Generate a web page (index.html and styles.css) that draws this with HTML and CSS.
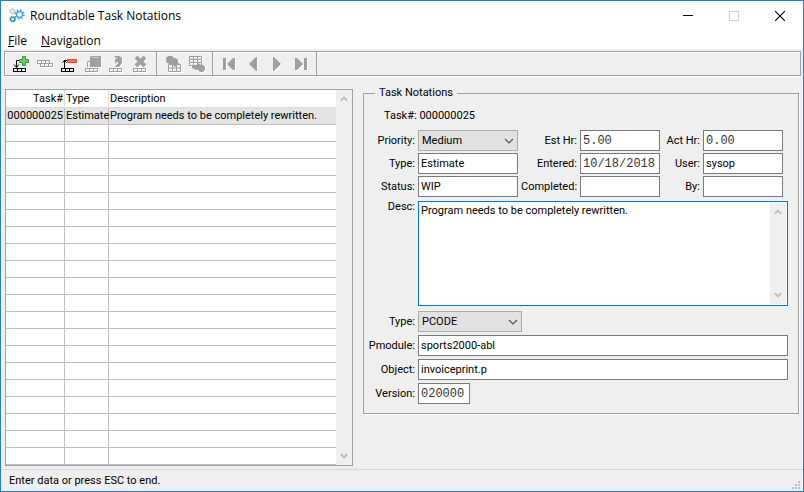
FILE: index.html
```html
<!DOCTYPE html>
<html lang="en">
<head>
<meta charset="utf-8">
<title>Roundtable Task Notations</title>
<link rel="stylesheet" href="styles.css">
<script src="rows.js" defer></script>
</head>
<body>
<svg class="defs" aria-hidden="true">
  <symbol id="strip" viewBox="0 0 13 4"><path d="M0 0h13v4H0zM1 1v2h3V1zM5 1v2h3V1zM9 1v2h3V1z" fill="currentColor" fill-rule="evenodd"/></symbol>
  <symbol id="up" viewBox="0 0 8 6"><path d="M.8 4.8 4 1.6l3.2 3.2" fill="none" stroke="#bfbfbf" stroke-width="2"/></symbol>
  <symbol id="down" viewBox="0 0 8 6"><path d="M.8 1.2 4 4.4l3.2-3.2" fill="none" stroke="#bfbfbf" stroke-width="2"/></symbol>
  <symbol id="chevron" viewBox="0 0 10 6"><path d="m1 1 4 4 4-4" fill="none" stroke="#555" stroke-width="1.2"/></symbol>
</svg>
<div class="window">
  <header class="titlebar">
    <svg width="16" height="16" viewBox="0 0 16 16" fill="none">
      <circle cx="10.500" cy="6.500" r="3" stroke="#35a7dc" stroke-width="1.300"/>
      <circle cx="10.500" cy="6.500" r="4.300" stroke="#35a7dc" stroke-width="1.800" stroke-dasharray="1.500 1.880"/>
      <circle cx="3.500" cy="3.300" r="1.800" stroke="#a9b4ba"/>
      <circle cx="3.500" cy="3.300" r="2.700" stroke="#a9b4ba" stroke-dasharray="1 1.120"/>
      <circle cx="3.700" cy="11.200" r="2" stroke="#337fae" stroke-width="1.200"/>
      <circle cx="3.700" cy="11.200" r="3" stroke="#337fae" stroke-dasharray="1.200 1.150"/>
    </svg>
    <h1>Roundtable Task Notations</h1>
    <div class="controls">
      <button aria-label="Minimize"><svg width="10" height="10"><path d="M0 4.500h10" stroke="#000"/></svg></button>
      <button aria-label="Maximize" disabled><svg width="10" height="10"><path d="M.5.5h9v9h-9z" fill="none" stroke="#ccc"/></svg></button>
      <button aria-label="Close"><svg width="10" height="10"><path d="m0 0 10 10M10 0 0 10" stroke="#000" stroke-width="1.100"/></svg></button>
    </div>
  </header>
  <nav class="menu"><a href="#file"><u>F</u>ile</a><a href="#navigation"><u>N</u>avigation</a></nav>

  <div class="toolbar" role="toolbar" aria-label="Task notation tools">
    <div class="group">
      <button class="on" aria-label="Add"><svg width="16" height="16"><use href="#strip" y="12" width="13" height="4"/><path d="M3.500 11V4.500H7M1 8.500l2.500 3L6 8.500" fill="none" stroke="currentColor"/><path d="M9.500.5h3v3h3v3h-3v3h-3v-3h-3v-3h3z" fill="#6dcc62" stroke="#2f9c3a"/></svg></button>
      <button aria-label="Rows"><svg width="16" height="16"><use href="#strip" y="4" width="13" height="4"/><use href="#strip" x="3" y="7" width="13" height="4"/></svg></button>
      <button class="on" aria-label="Delete"><svg width="16" height="16"><use href="#strip" y="12" width="13" height="4"/><path d="M3.500 12V4.500H7M1.500 6.500l2-2 2 2" fill="none" stroke="currentColor"/><path d="M6.500 3.500h9v3h-9z" fill="#ff704f" stroke="#e2472d"/></svg></button>
      <button aria-label="Save" disabled><svg width="16" height="16"><use href="#strip" y="12" width="13" height="4"/><path d="M2.500 11V5.500H5" fill="none" stroke="currentColor"/><path d="M5 1l1-1h10v11H5z" fill="currentColor"/><path d="M7 1.500h7" stroke="#efefef" opacity=".6"/></svg></button>
      <button aria-label="Undo" disabled><svg width="16" height="16"><use href="#strip" y="12" width="13" height="4"/><path d="M5 0h5l3 2v5l-3 4H6l3-4V6H8L6 8V3h2z" fill="currentColor"/></svg></button>
      <button aria-label="Cancel" disabled><svg width="16" height="16"><use href="#strip" y="12" width="13" height="4"/><path d="m3 1 9 9M12 1 3 10" stroke="currentColor" stroke-width="4"/></svg></button>
    </div>
    <div class="group">
      <button aria-label="Copy to table" disabled><svg width="16" height="16"><path d="M3 0h4l2 2h2l2 2v3l2 1-4 3-4-3H4L1 6V2z" fill="currentColor"/><path d="M3.500 8.500h12v7h-12zM3 12h12M7.500 8v8M11.500 8v8" fill="#efefef" stroke="currentColor"/><path d="M6 7h8l-4 4z" fill="currentColor"/></svg></button>
      <button aria-label="Copy from table" disabled><svg width="16" height="16"><path d="M.5.5h12v9H.5zM0 3.500h12M0 6.500h12M4.500 0v10M8.500 0v10" fill="none" stroke="currentColor"/><path d="M3 9h5V6l4 3h2l2 2v3l-2 2h-3l-2-2H7l-4-2z" fill="currentColor"/></svg></button>
    </div>
    <div class="group">
      <button aria-label="First" disabled><svg width="16" height="16"><path d="M2 2h3v12H2zM14 2v12H12L6 8l6-6z" fill="currentColor"/></svg></button>
      <button aria-label="Previous" disabled><svg width="16" height="16"><path d="M12 1v14h-1L4 8l7-7z" fill="currentColor"/></svg></button>
      <button aria-label="Next" disabled><svg width="16" height="16"><path d="M4 1v14h1l7-7-7-7z" fill="currentColor"/></svg></button>
      <button aria-label="Last" disabled><svg width="16" height="16"><path d="M11 2h3v12h-3zM2 2v12h2l6-6-6-6z" fill="currentColor"/></svg></button>
    </div>
  </div>

  <main>
    <div class="browse">
      <table>
        <colgroup><col class="c-task"><col class="c-type"><col></colgroup>
        <thead><tr><th class="num">Task#</th><th>Type</th><th>Description</th></tr></thead>
        <tbody id="rows"><tr class="selected"><td class="num">000000025</td><td>Estimate</td><td>Program needs to be completely rewritten.</td></tr></tbody>
      </table>
      <div class="scroll"><svg width="8" height="6"><use href="#up"/></svg><svg width="8" height="6"><use href="#down"/></svg></div>
    </div>

    <fieldset>
      <legend>Task Notations</legend>
      <form>
        <p class="task"><span>Task#:</span> <output>000000025</output></p>
        <label for="priority">Priority:</label>
        <div class="select"><select id="priority"><option>Medium</option></select><svg width="10" height="6"><use href="#chevron"/></svg></div>
        <label for="est">Est Hr:</label><input id="est" class="mono" value="5.00">
        <label for="act">Act Hr:</label><input id="act" class="mono short" value="0.00">

        <label for="type">Type:</label><input id="type" value="Estimate">
        <label for="entered">Entered:</label><input id="entered" class="mono" value="10/18/2018">
        <label for="user">User:</label><input id="user" class="short" value="sysop">

        <label for="status">Status:</label><input id="status" value="WIP">
        <label for="completed">Completed:</label><input id="completed">
        <label for="by">By:</label><input id="by" class="short">

        <label for="desc" class="top">Desc:</label>
        <div class="memo wide"><textarea id="desc" autofocus>Program needs to be completely rewritten.</textarea>
          <div class="scroll"><svg width="8" height="6"><use href="#up"/></svg><svg width="8" height="6"><use href="#down"/></svg></div></div>

        <label for="otype">Type:</label>
        <div class="select wide otype"><select id="otype"><option>PCODE</option></select><svg width="10" height="6"><use href="#chevron"/></svg></div>
        <label for="pmodule">Pmodule:</label><input id="pmodule" class="wide" value="sports2000-abl">
        <label for="object">Object:</label><input id="object" class="wide" value="invoiceprint.p">
        <label for="version">Version:</label><input id="version" class="wide mono version" value="020000">
      </form>
    </fieldset>
  </main>

  <footer><span>Enter data or press ESC to end.</span>
    <svg width="8" height="8"><path d="M6 0h2v2H6zM3 3h2v2H3zM6 3h2v2H6zM0 6h2v2H0zM3 6h2v2H3zM6 6h2v2H6z" fill="#bfbfbf"/></svg>
  </footer>
</div>
</body>
</html>
```
FILE: rows.js
```js
// Fill the browse with the empty rows that follow the data.
const EMPTY_ROWS = 20;
const body = document.getElementById("rows");
for (let i = 0; i < EMPTY_ROWS; i++) {
  const row = body.insertRow();
  for (let c = 0; c < 3; c++) row.insertCell();
}
document.getElementById("desc").setSelectionRange(0, 0);
```
FILE: styles.css
```css
* { box-sizing: border-box; }
body { margin: 0; font: 11px/14px Roboto, "Liberation Sans", sans-serif; color: #000; }
button, input, select, textarea { font: inherit; color: inherit; border-radius: 0; margin: 0; }
button { border: 0; padding: 0; background: none; display: grid; place-items: center; }
svg { display: block; flex: none; }
.defs { position: absolute; width: 0; height: 0; }

.window { min-height: 100vh; display: flex; flex-direction: column; border: 1px solid #1a80d4; background: #efefef; }

.titlebar { display: flex; align-items: center; height: 30px; padding-left: 8px; gap: 5px; background: #fff; }
.titlebar h1 { margin: 0; flex: 1; font: 12px/16px "Open Sans", sans-serif; }
.controls { display: flex; }
.controls button { width: 46px; height: 28px; }

.menu { display: flex; gap: 14px; height: 18px; padding-left: 7px; background: #fff; font: 12px/20px "Open Sans", sans-serif; }
.menu a { color: inherit; text-decoration: none; }

.toolbar { display: flex; margin: 2px 2px 0 3px; height: 25px; border: 1px solid #a0a0a0; box-shadow: 0 1px #fff, inset 1px 1px #fff; }
.group { display: flex; padding: 0 3px 0 4px; border-right: 1px solid #a0a0a0; }
.group button { width: 24px; color: #a0a0a0; }
.group svg { filter: drop-shadow(1px 1px 0 #fff); }
.group .on { color: #000; }
.group .on svg { filter: none; }

main { flex: 1; display: grid; grid-template-columns: minmax(0, 348fr) minmax(0, 436fr); column-gap: 10px; align-items: start; padding: 13px 4px 3px; }

.browse { display: flex; border: 1px solid #a0a0a8; background: #fff; }
.browse table { flex: 1; width: 100%; min-width: 0; table-layout: fixed; border-collapse: separate; border-spacing: 0; }
.c-task { width: 59px; }
.c-type { width: 44px; }
th, td { height: 17px; padding: 0 1px; font-weight: normal; text-align: left; white-space: nowrap; line-height: 16px; border: solid #bdbdbd; border-width: 0 1px 1px 0; }
th { height: 18px; border-color: #dcdcdc; }
th:last-child, td:last-child { border-right: 0; }
.num { text-align: right; }
.selected td { background: #e3e3e3; }
.scroll { flex: none; width: 16px; background: #efefef; display: flex; flex-direction: column; align-items: center; justify-content: space-between; padding: 6px 0; }

fieldset { margin: 0; min-width: 0; padding: 0 10px 9px 4px; border: 1px solid #a0a0a0; box-shadow: 1px 1px #fff; }
legend { margin-left: 7px; padding: 0 4px; height: 8px; line-height: 8px; }
form { display: grid; grid-template-columns: 47px 100px 56px 80px 37px 1fr; gap: 2px 3px; align-items: center; }
.task { grid-column: 1 / -1; margin: 12px 0 5px 16px; }
label { text-align: right; white-space: nowrap; }
input, select { width: 100%; height: 21px; padding: 0 2px; border: 1px solid #7a7a7a; background: #fff; }
input { padding-bottom: 1px; }
.mono { font: 12px "Liberation Mono", monospace; color: #333; padding-bottom: 0; }
.short { width: 80px; }
.wide { grid-column: 2 / -1; }
.select { display: grid; align-items: center; }
.select > * { grid-area: 1 / 1; }
.select svg { justify-self: end; margin-right: 4px; pointer-events: none; }
select { appearance: none; border-color: #adadad; background: #e1e1e1; padding: 0 3px; }
.otype { width: 104px; }
.version { width: 52px; }
.top { align-self: start; margin-top: 1px; }
.memo { display: flex; height: 105px; margin: 2px 0 3px; padding: 1px; border: 1px solid #0078d7; background: #fff; }
.memo textarea { flex: 1; min-width: 0; border: 0; outline: 0; resize: none; padding: 1px; background: none; }
.otype, #pmodule, #object { margin-bottom: 1px; }

footer { display: flex; align-items: center; justify-content: space-between; height: 22px; padding: 0 3px 0 8px; border-top: 1px solid #d7d7d7; }
footer svg { align-self: end; margin-bottom: 2px; }
```
